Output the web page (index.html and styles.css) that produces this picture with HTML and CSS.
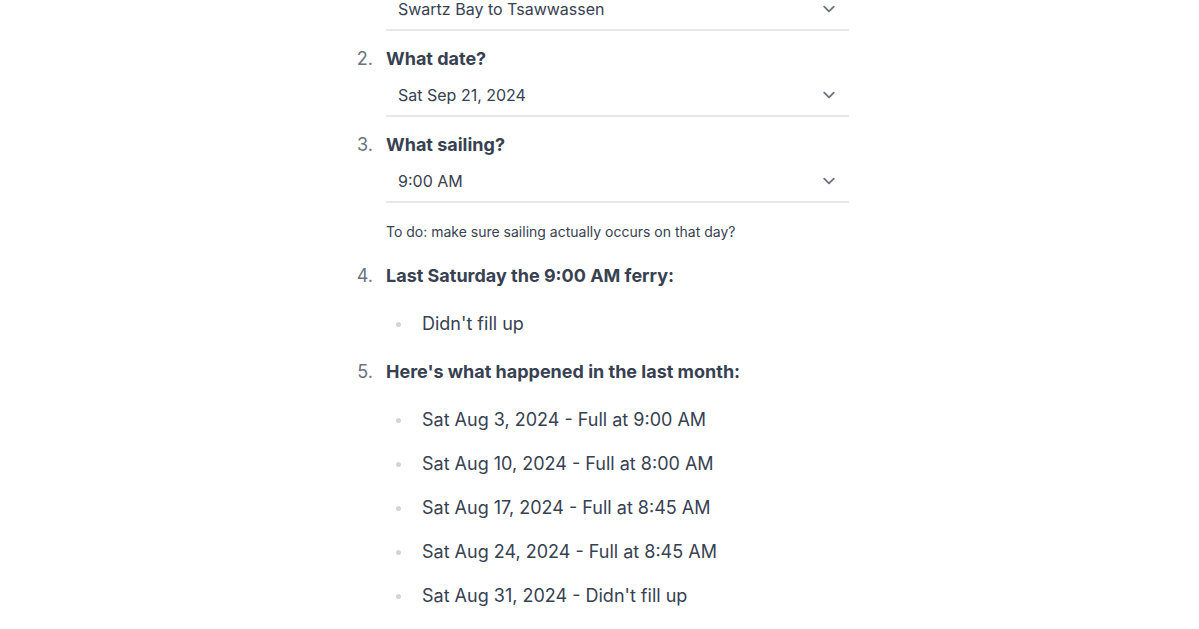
FILE: index.html
```html
<!DOCTYPE html>
<html lang="en">
<head>
<meta charset="utf-8">
<title>Ferry</title>
<link rel="stylesheet" href="styles.css">
</head>
<body>
<main class="page">
  <ol class="steps">
    <li class="step">
      <div class="step-body">
        <div class="question">Which route?</div>
        <div class="select"><span>Swartz Bay to Tsawwassen</span><svg class="chev" viewBox="0 0 20 20"><path d="M6 8l4 4 4-4" fill="none" stroke="#6b7280" stroke-width="1.5" stroke-linecap="round" stroke-linejoin="round"/></svg></div>
      </div>
    </li>
    <li class="step">
      <div class="step-body">
        <div class="question">What date?</div>
        <div class="select"><span>Sat Sep 21, 2024</span><svg class="chev" viewBox="0 0 20 20"><path d="M6 8l4 4 4-4" fill="none" stroke="#6b7280" stroke-width="1.5" stroke-linecap="round" stroke-linejoin="round"/></svg></div>
      </div>
    </li>
    <li class="step">
      <div class="step-body">
        <div class="question">What sailing?</div>
        <div class="select select-last"><span>9:00 AM</span><svg class="chev" viewBox="0 0 20 20"><path d="M6 8l4 4 4-4" fill="none" stroke="#6b7280" stroke-width="1.5" stroke-linecap="round" stroke-linejoin="round"/></svg></div>
        <p class="todo">To do: make sure sailing actually occurs on that day?</p>
      </div>
    </li>
    <li class="step">
      <div class="step-body">
        <div class="question">Last Saturday the 9:00 AM ferry:</div>
        <ul class="bullets">
          <li>Didn't fill up</li>
        </ul>
      </div>
    </li>
    <li class="step">
      <div class="step-body">
        <div class="question">Here's what happened in the last month:</div>
        <ul class="bullets">
          <li>Sat Aug 3, 2024 - Full at 9:00 AM</li>
          <li>Sat Aug 10, 2024 - Full at 8:00 AM</li>
          <li>Sat Aug 17, 2024 - Full at 8:45 AM</li>
          <li>Sat Aug 24, 2024 - Full at 8:45 AM</li>
          <li>Sat Aug 31, 2024 - Didn't fill up</li>
        </ul>
      </div>
    </li>
  </ol>
</main>
</body>
</html>
```
FILE: styles.css
```css
html, body {
  margin: 0;
  padding: 0;
  background: #ffffff;
}
body {
  font-family: Inter, "Noto Sans", sans-serif;
  font-size: 18px;
  line-height: 28px;
  color: #374151;
  overflow: hidden;
}
.page {
  width: 495px;
  margin: -41px 0 0 354px;
}
.steps {
  list-style: none;
  margin: 0;
  padding: 0;
  counter-reset: step;
}
.step {
  counter-increment: step;
  display: grid;
  grid-template-columns: 32px 1fr;
}
.step::before {
  content: counter(step) ".";
  color: #6b7280;
  text-align: right;
  padding-right: 13px;
}
.question {
  font-weight: 700;
  color: #374151;
}
.select {
  display: flex;
  align-items: center;
  justify-content: space-between;
  height: 42px;
  box-sizing: content-box;
  border-bottom: 2px solid #e5e7eb;
  padding: 0 8px 0 12px;
  margin-bottom: 14px;
  font-size: 16px;
  line-height: 24px;
}
.select span {
  padding-top: 2px;
}
.select-last {
  margin-bottom: 0;
}
.chev {
  width: 24px;
  height: 24px;
  display: block;
  margin-top: 2px;
}
.todo {
  font-size: 14px;
  line-height: 20px;
  margin: 19px 0 20px;
}
.bullets {
  list-style: none;
  margin: 20px 0;
  padding: 0 0 0 10px;
  display: flex;
  flex-direction: column;
  gap: 16px;
}
.bullets li {
  display: flex;
  align-items: center;
}
.bullets li::before {
  content: "";
  width: 5px;
  height: 5px;
  border-radius: 50%;
  background: #d1d5db;
  margin-right: 21px;
  flex: none;
}
```
